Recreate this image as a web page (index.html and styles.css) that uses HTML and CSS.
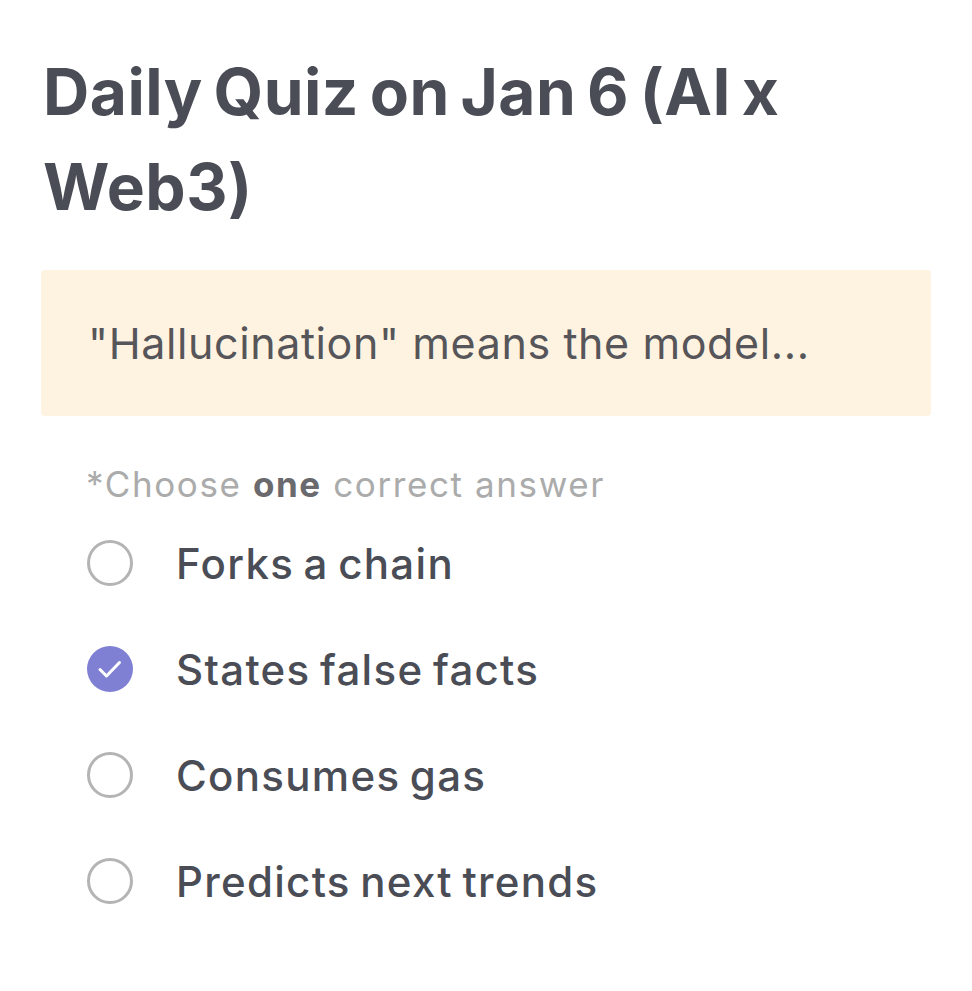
FILE: index.html
```html
<!DOCTYPE html>
<html lang="en">
<head>
<meta charset="utf-8">
<title>Daily Quiz</title>
<link rel="stylesheet" href="styles.css">
</head>
<body>
<main class="quiz">
  <h1 class="title">Daily Quiz on Jan 6 (AI x Web3)</h1>
  <div class="question">"Hallucination" means the model...</div>
  <p class="hint">*Choose <b>one</b> correct answer</p>
  <ul class="options">
    <li class="option">
      <span class="radio"></span>
      <span class="label">Forks a chain</span>
    </li>
    <li class="option">
      <span class="radio checked">
        <svg viewBox="0 0 46 46" width="46" height="46" aria-hidden="true"><polyline points="13,23.5 19.5,30 32.5,16.5" fill="none" stroke="#fff" stroke-width="3" stroke-linecap="round" stroke-linejoin="round"/></svg>
      </span>
      <span class="label">States false facts</span>
    </li>
    <li class="option">
      <span class="radio"></span>
      <span class="label">Consumes gas</span>
    </li>
    <li class="option">
      <span class="radio"></span>
      <span class="label">Predicts next trends</span>
    </li>
  </ul>
</main>
</body>
</html>
```
FILE: styles.css
```css
html, body {
  margin: 0;
  padding: 0;
  background: #ffffff;
}

body {
  font-family: Inter, "Noto Sans", "Liberation Sans", sans-serif;
  color: #4a4d55;
}

.quiz {
  padding: 44px 41px 0 41px;
}

.title {
  margin: 0;
  padding-left: 2px;
  font-size: 64px;
  line-height: 95px;
  font-weight: 650;
  color: #4a4d56;
  letter-spacing: 0.5px;
  word-spacing: -5px;
}

.question {
  margin-top: 36px;
  height: 146px;
  display: flex;
  align-items: center;
  padding-left: 47px;
  background: #fef3e1;
  border-radius: 4px;
  font-size: 43px;
  font-weight: 400;
  letter-spacing: 0.6px;
  color: #56565a;
}

.hint {
  margin: 47px 0 0 0;
  padding-left: 45px;
  font-size: 35px;
  line-height: normal;
  letter-spacing: 1.6px;
  color: #ababab;
}

.hint b {
  font-weight: 700;
  color: #6a6a6e;
}

.options {
  list-style: none;
  margin: 5px 0 0 0;
  padding: 0 0 0 46px;
}

.option {
  display: flex;
  align-items: center;
  gap: 43px;
  height: 106px;
}

.radio {
  box-sizing: border-box;
  width: 46px;
  height: 46px;
  flex: none;
  border: 3px solid #b4b4b4;
  border-radius: 50%;
  display: flex;
  align-items: center;
  justify-content: center;
}

.radio.checked {
  border: none;
  background: #7f80d3;
}

.label {
  font-size: 42px;
  font-weight: 500;
  letter-spacing: 1.3px;
  word-spacing: -3px;
  color: #4a4d55;
}
```
